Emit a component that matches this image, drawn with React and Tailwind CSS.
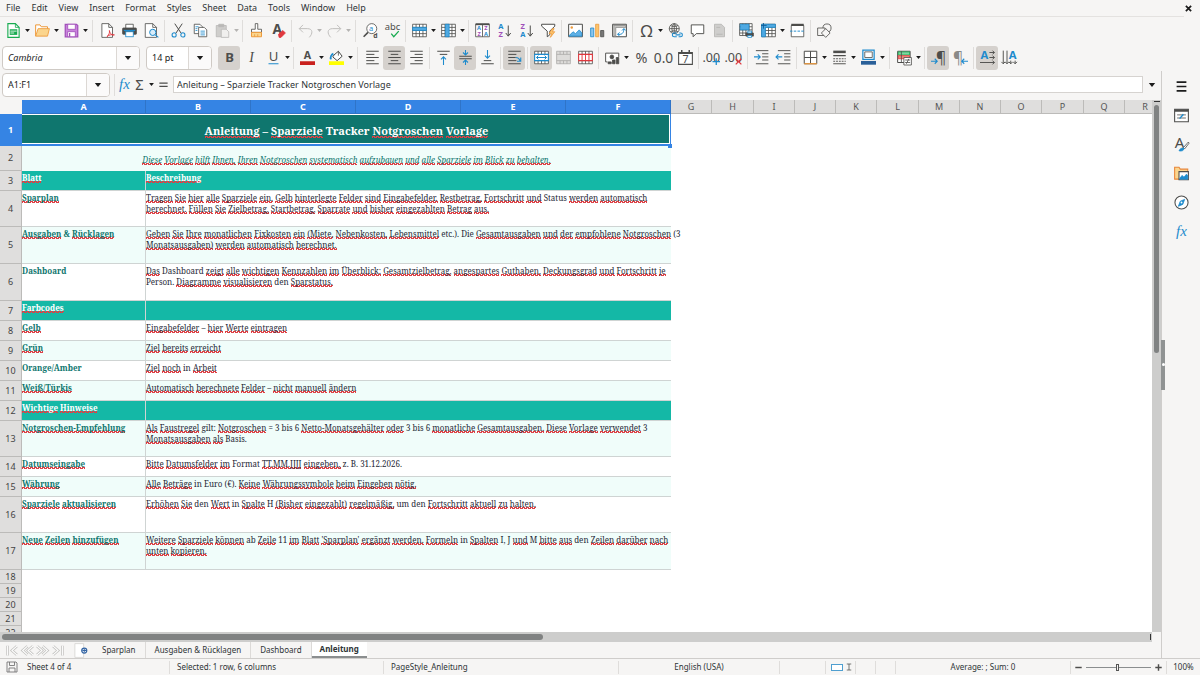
import { useState } from 'react';

const DARK = '#4d4d4b';
const BLUE = '#1e8bcd';
const RED = '#e0383e';
const ORANGE = '#ed9a3c';
const PURPLE = '#a14fb9';
const GREEN = '#18ab50';

const MENUS = ['File', 'Edit', 'View', 'Insert', 'Format', 'Styles', 'Sheet', 'Data', 'Tools', 'Window', 'Help'];

function Svg({ children, className = 'size-[15px]' }) {
  return (
    <svg viewBox="0 0 24 24" className={`overflow-visible ${className}`} fill="none" stroke={DARK} strokeWidth="1.3" aria-hidden="true">
      {children}
    </svg>
  );
}

// text glyph inside an icon
function G({ x, y, size, color = DARK, bold, italic, serif, children }) {
  return (
    <text
      x={x}
      y={y}
      fontSize={size}
      fill={color}
      stroke="none"
      textAnchor="middle"
      fontWeight={bold ? 700 : 400}
      fontStyle={italic ? 'italic' : 'normal'}
      fontFamily={serif ? 'Liberation Serif, serif' : 'Noto Sans, sans-serif'}
    >
      {children}
    </text>
  );
}

const grid = 'M1 2h22v20H1zM1 7h22M1 12h22M1 17h22M6.5 2v20M12 2v20M17.5 2v20';

const ICONS = {
  new: (
    <>
      <path d="M3 1h12l6 6v16H3z" fill="#fff" stroke={GREEN} strokeWidth="1.8" />
      <path d="M15 1v6h6" stroke={GREEN} />
      <rect x="6" y="10" width="12" height="9" fill={GREEN} stroke="none" />
      <path d="M7 13h10M7 16h6" stroke="#fff" />
    </>
  ),
  open: (
    <>
      <path d="M1 21V3h7l2 3h10v4" fill="#fff" stroke={ORANGE} strokeWidth="1.6" />
      <path d="M1 21l4-12h18l-3 12z" fill="#fbd58d" stroke={ORANGE} strokeWidth="1.4" />
    </>
  ),
  save: (
    <>
      <path d="M2 2h18l2 2v18H2z" fill="#c983dc" stroke={PURPLE} strokeWidth="2" />
      <rect x="6" y="2" width="12" height="8" fill="#fff" stroke={PURPLE} />
      <rect x="6" y="14" width="12" height="8" fill="#fff" stroke={PURPLE} />
      <path d="M9 16v6" stroke={PURPLE} strokeWidth="2" />
    </>
  ),
  pdf: (
    <>
      <path d="M3 1h11l6 6v16H3z" fill="#fff" />
      <path d="M14 1v6h6" />
      <path d="M11 22c3-2 5-7 4-10 1 5 4 8 8 7-5-1-9 0-12 3z" stroke={RED} strokeWidth="1.5" />
    </>
  ),
  print: (
    <>
      <path d="M6 8V2h12v6" fill="#fff" />
      <rect x="1" y="8" width="22" height="10" rx="1" fill={DARK} />
      <rect x="6" y="14" width="12" height="8" fill="#fff" stroke={BLUE} />
      <path d="M3 12h18" stroke={BLUE} strokeWidth="2" />
    </>
  ),
  preview: (
    <>
      <path d="M2 1h12l6 6v16H2z" fill="#fff" />
      <path d="M14 1v6h6" />
      <circle cx="14" cy="15" r="5" fill="#d9edfa" stroke={BLUE} strokeWidth="1.6" />
      <path d="M18 19l5 4" stroke={BLUE} strokeWidth="2" />
    </>
  ),
  cut: (
    <>
      <path d="M6 1l10 15M18 1L8 16" strokeWidth="1.6" />
      <circle cx="5" cy="19" r="3.3" stroke={BLUE} strokeWidth="1.7" />
      <circle cx="19" cy="19" r="3.3" stroke={BLUE} strokeWidth="1.7" />
    </>
  ),
  copy: (
    <>
      <path d="M2 2h9l4 4v11H2z" fill="#fff" />
      <path d="M9 7h9l4 4v11H9z" fill="#fff" />
      <path d="M4 6h5M4 9h3M4 12h3M12 13h7M12 16h7M12 19h7" stroke={BLUE} />
    </>
  ),
  paste: (
    <g stroke="#b9b8b6">
      <path d="M2 4h16v18H2z" fill="#cfcecc" />
      <path d="M6 2h8v4H6z" fill="#b9b8b6" />
      <path d="M10 10h8l4 4v9H10z" fill="#f0efee" />
    </g>
  ),
  brush: (
    <>
      <path d="M10 1h4v9h6v5H4v-5h6z" fill="#fff" />
      <path d="M4 15h16v7H4z" fill="#fbd58d" stroke={ORANGE} strokeWidth="1.6" />
      <path d="M9 22v-4M14 22v-4" stroke={ORANGE} />
    </>
  ),
  clear: (
    <>
      <G x={10} y={18} size={22} bold>A</G>
      <path d="M12 18l7-6 4 4-7 7h-3z" fill={RED} stroke={RED} />
    </>
  ),
  undo: <path d="M8 3L2 9l6 6M2 9h13c9 0 9 8 3 14" stroke="#bdbcba" strokeWidth="1.5" />,
  redo: <path d="M16 3l6 6-6 6M22 9H9c-9 0-9 8-3 14" stroke="#bdbcba" strokeWidth="1.5" />,
  find: (
    <>
      <circle cx="14" cy="9" r="8" fill="#fff" />
      <path d="M8 15l-7 7" strokeWidth="2.6" />
      <G x={13} y={12} size={12} color={BLUE}>a</G>
      <G x={20} y={24} size={11} bold>d</G>
    </>
  ),
  spell: (
    <>
      <G x={12} y={11} size={15}>abc</G>
      <path d="M10 17l4 5 8-9" stroke={GREEN} strokeWidth="2" />
    </>
  ),
  row: (
    <>
      <path d={grid} fill="#fff" />
      <path d="M1 7h22v5H1z" fill="#4fa9e2" stroke={BLUE} />
    </>
  ),
  column: (
    <>
      <path d={grid} fill="#fff" />
      <path d="M7 2h6v20H7z" fill="#4fa9e2" stroke={BLUE} />
    </>
  ),
  sort: (
    <>
      <path d="M1 2h22v20H1zM12 2v20" fill="#fff" />
      <path d="M1 2h22" strokeWidth="3" />
      <G x={6.5} y={11} size={9} color={BLUE} bold>A</G>
      <G x={6.5} y={21} size={9} color={PURPLE} bold>Z</G>
      <G x={17.5} y={11} size={9} color={PURPLE} bold>Z</G>
      <G x={17.5} y={21} size={9} color={BLUE} bold>A</G>
    </>
  ),
  sortAsc: (
    <>
      <G x={6} y={9} size={12} color={BLUE} bold>A</G>
      <G x={6} y={23} size={12} color={PURPLE} bold>Z</G>
      <path d="M18 4v17M14 16l4 5 4-5" strokeWidth="1.6" />
    </>
  ),
  sortDesc: (
    <>
      <G x={6} y={9} size={12} color={PURPLE} bold>Z</G>
      <G x={6} y={23} size={12} color={BLUE} bold>A</G>
      <path d="M18 4v17M14 16l4 5 4-5" strokeWidth="1.6" />
    </>
  ),
  filter: (
    <>
      <path d="M1 2h21v3l-8 8v6l-4 3v-9L1 5z" fill="#fff" strokeWidth="1.6" />
      <path d="M18 9l-5 8h4l-2 6 7-9h-4l3-5z" fill="#fbc56d" stroke={ORANGE} />
    </>
  ),
  image: (
    <>
      <path d="M1 2h22v20H1z" fill="#fff" strokeWidth="1.6" />
      <path d="M2 20l6-6 4 3 6-6 4 5v5H2z" fill="#5fb0e6" stroke={BLUE} />
      <circle cx="6" cy="7" r="2" fill={ORANGE} stroke="none" />
    </>
  ),
  chart: (
    <>
      <path d="M1 8h5v14H1z" fill="#8cc5ec" stroke={BLUE} />
      <path d="M9 2h5v20H9z" fill="#fbc56d" stroke={ORANGE} />
      <path d="M17 12h5v10h-5z" fill="#777" />
    </>
  ),
  pivot: (
    <>
      <path d="M1 2h22v20H1z" fill="#fff" strokeWidth="1.6" />
      <path d="M2 4h20v3H6v14H3V4" fill="#c9c8c6" stroke="#8a8a88" />
      <path d="M9 18c6 1 10-1 10-9M9 18l3-3M9 18l3 3M19 9l-3 3M19 9l3 3" stroke={BLUE} strokeWidth="1.6" />
    </>
  ),
  omega: <G x={12} y={22} size={27}>Ω</G>,
  link: (
    <>
      <circle cx="10" cy="9" r="8" />
      <path d="M2 9h16M10 1v16M4 4c3 2 9 2 12 0M4 14c3-2 9-2 12 0M10 1c-5 4-5 12 0 16M10 1c5 4 5 12 0 16" />
      <path d="M14 16h-4c-4 0-4 6 0 6h4M18 16h2c4 0 4 6 0 6h-3M12 19h8" stroke={BLUE} strokeWidth="1.8" />
    </>
  ),
  comment: <path d="M2 3h20v14H10l-5 5v-5H2z" fill="#fff" strokeWidth="1.5" />,
  headers: <path d="M4 2h11l5 5v15H4zM7 18h10M7 7h6" fill="#cfcecc" stroke="#b5b4b2" />,
  printRange: (
    <>
      <path d="M1 1h20v19H1zM1 6h20M1 11h20M1 16h20M6 1v19M11 1v19M16 1v19" fill="#fff" />
      <path d="M2 2h14v9H2z" fill="#4fa9e2" stroke={BLUE} />
      <path d="M11 16h12v5H11z" fill={DARK} />
      <path d="M14 13h6v3h-6zM14 20h6v3h-6z" fill="#fff" stroke={BLUE} />
    </>
  ),
  freeze: (
    <>
      <path d={grid} fill="#fff" />
      <path d="M1 2h22v5H7v15H1z" fill="#4fa9e2" stroke={BLUE} />
      <path d="M4 0v9M0 4h9" stroke="#0e5a94" />
    </>
  ),
  split: (
    <>
      <path d="M2 4h20v18H2z" fill="#fff" />
      <path d="M2 3h20" strokeWidth="3.5" />
      <path d="M0 13h24" stroke={BLUE} strokeDasharray="4 2" strokeWidth="1.5" />
    </>
  ),
  shapes: (
    <>
      <circle cx="16" cy="8" r="6.5" />
      <path d="M1 8h12v12H1z" fill="#f6f5f4" />
      <path d="M14 9l7 7-7 7-7-7z" fill="#f6f5f4" />
    </>
  ),
  bold: <G x={12} y={19.5} size={21} bold>B</G>,
  italic: <G x={12} y={19.5} size={22} italic serif>I</G>,
  underline: (
    <>
      <G x={12} y={17} size={21}>U</G>
      <path d="M4 22h16" stroke={BLUE} strokeWidth="1.6" />
    </>
  ),
  fontColor: (
    <>
      <G x={12} y={15} size={17} bold>A</G>
      <path d="M0 21h24" stroke="#c9211e" strokeWidth="6" />
    </>
  ),
  fill: (
    <>
      <path d="M8 8l7-6 6 8-8 7-7-6z" fill="#fff" strokeWidth="1.6" />
      <path d="M15 2v7" />
      <path d="M7 6c-3 1-5 5-4 9" stroke={BLUE} strokeWidth="3" />
      <path d="M0 21h24" stroke="#ffff00" strokeWidth="6" />
    </>
  ),
  left: <path d="M2 2h20M2 7h13M2 12h20M2 17h13M2 22h20" strokeWidth="1.6" />,
  center: <path d="M2 2h20M6 7h12M2 12h20M6 17h12M2 22h20" strokeWidth="1.6" />,
  right: <path d="M2 2h20M9 7h13M2 12h20M9 17h13M2 22h20" strokeWidth="1.6" />,
  top: (
    <>
      <path d="M2 2h20M6 7h12" strokeWidth="1.6" />
      <path d="M12 24V11M8 15l4-4 4 4" stroke={BLUE} strokeWidth="1.7" />
    </>
  ),
  middle: (
    <>
      <path d="M2 10h20M2 14h20" strokeWidth="1.6" />
      <path d="M12 0v8M8 4l4 4 4-4M12 24v-8M8 20l4-4 4 4" stroke={BLUE} strokeWidth="1.7" />
    </>
  ),
  bottom: (
    <>
      <path d="M2 22h20M6 17h12" strokeWidth="1.6" />
      <path d="M12 0v13M8 9l4 4 4-4" stroke={BLUE} strokeWidth="1.7" />
    </>
  ),
  wrap: (
    <>
      <path d="M2 2h20M2 7h13M2 12h12M2 17h13M2 22h20" strokeWidth="1.6" />
      <path d="M14 12c4 0 6 2 7 6M16 18h6v-6" stroke={BLUE} strokeWidth="1.7" />
    </>
  ),
  merge: (
    <>
      <path d={grid} fill="#fff" />
      <path d="M1 7h22v10H1z" fill="#fff" stroke={BLUE} strokeWidth="1.7" />
      <path d="M4 12h16M7 9l-3 3 3 3M17 9l3 3-3 3" stroke={BLUE} strokeWidth="1.6" />
    </>
  ),
  split2: <path d="M1 2h22v20H1zM1 7h22M1 17h22M6.5 2v5M12 2v5M17.5 2v5M6.5 17v5M12 17v5M17.5 17v5" fill="#dddcda" stroke="#acabaa" />,
  unmerge: (
    <>
      <path d={grid} fill="#fff" />
      <path d="M1 7h22v10H1z" fill="#fff" stroke={RED} strokeWidth="1.7" />
      <path d="M6.5 7v10M12 7v10M17.5 7v10" stroke={RED} strokeWidth="1.5" />
    </>
  ),
  currency: (
    <>
      <path d="M22 11V5H1v14h3" fill="#fff" strokeWidth="1.5" />
      <circle cx="11" cy="11" r="3" fill={DARK} />
      <path d="M12 16h4v6h-4zM18 12h4v10h-4zM5 19h5v3H5z" fill={DARK} />
    </>
  ),
  percent: <G x={12} y={20} size={23}>%</G>,
  number: <G x={12} y={20} size={22}>0.0</G>,
  date: (
    <>
      <path d="M1 4h22v19H1z" fill="#fff" strokeWidth="1.7" />
      <path d="M1 5h22M6 0v4M18 0v4" strokeWidth="2.4" />
      <G x={12} y={20} size={17}>7</G>
    </>
  ),
  addDecimal: (
    <>
      <G x={10} y={19} size={20}>.00</G>
      <path d="M18 13v11M12 18.5h12" stroke={BLUE} strokeWidth="2" />
    </>
  ),
  delDecimal: (
    <>
      <G x={10} y={19} size={20}>.00</G>
      <path d="M14 14l9 9M23 14l-9 9" stroke={RED} strokeWidth="2" />
    </>
  ),
  indent: (
    <>
      <path d="M3 1h20M13 6h10M13 11h10M13 16h10M3 22h20" strokeWidth="1.5" />
      <path d="M0 11h10M6 7l4 4-4 4" stroke={BLUE} strokeWidth="1.7" />
    </>
  ),
  outdent: (
    <>
      <path d="M3 1h20M13 6h10M13 11h10M13 16h10M3 22h20" strokeWidth="1.5" />
      <path d="M10 11H0M4 7l-4 4 4 4" stroke={BLUE} strokeWidth="1.7" />
    </>
  ),
  borders: (
    <>
      <path d="M2 2h20v20H2z" fill="#fff" strokeWidth="1.6" />
      <path d="M12 2v20M2 12h20" strokeWidth="1.6" />
      <path d="M2 22h20" stroke={ORANGE} strokeWidth="2" />
    </>
  ),
  borderStyle: (
    <>
      <path d="M2 3h20" strokeWidth="4" />
      <path d="M2 9h20" strokeWidth="2" />
      <path d="M2 14h20M2 18h20" strokeDasharray="3 1.5" strokeWidth="1.5" />
      <path d="M2 22h20" strokeWidth="1.5" />
    </>
  ),
  borderColor: (
    <>
      <path d="M3 0h18v15H3z" fill="#fff" stroke={BLUE} strokeWidth="2" />
      <path d="M6 3h12v9H6z" />
      <path d="M0 20.5h24" stroke="#2a6099" strokeWidth="6" />
    </>
  ),
  conditional: (
    <>
      <path d="M1 2h20v18H1z" fill="#fff" strokeWidth="1.6" />
      <path d="M2 3h18v5H2z" fill="#7ed6a0" stroke={GREEN} />
      <path d="M2 9h18v5H2z" fill="#f08a7a" stroke={RED} />
      <path d="M7 2v18" />
      <path d="M11 12h12v12H11z" fill="#fff" />
      <path d="M13 16h8M13 20h8M19 14l-4 8" />
    </>
  ),
  ltr: (
    <>
      <G x={16} y={20} size={25}>¶</G>
      <path d="M0 18h10M6 14l4 4-4 4" stroke={BLUE} strokeWidth="1.7" />
    </>
  ),
  rtl: (
    <>
      <G x={8} y={20} size={25} color="#8a8a88">¶</G>
      <path d="M24 18H14M18 14l-4 4 4 4" stroke={BLUE} strokeWidth="1.7" />
    </>
  ),
  horizontalText: (
    <>
      <G x={7} y={15} size={18} color={BLUE} bold>A</G>
      <path d="M15 4h8M20 1l3 3-3 3M15 12h8M20 9l3 3-3 3M0 20h23M20 17l3 3-3 3" strokeWidth="1.5" />
    </>
  ),
  verticalText: (
    <>
      <G x={17} y={15} size={18} color={BLUE} bold>A</G>
      <path d="M2 1v21M-1 19l3 3 3-3M8 1v21M5 19l3 3 3-3M14 17v5M11 19l3 3 3-3M21 17v5M18 19l3 3 3-3" strokeWidth="1.5" />
    </>
  ),
  fx: <G x={12} y={19} size={24} color={BLUE} italic serif>fx</G>,
  sum: <G x={12} y={22} size={27}>Σ</G>,
  equals: <path d="M3 9h18M3 16h18" strokeWidth="2.8" />,
  properties: (
    <>
      <path d="M1 2h22v20H1z" fill="#fff" strokeWidth="1.7" />
      <path d="M1 4h22" strokeWidth="4" />
      <path d="M5 11h14M5 16h14" />
      <path d="M9 17l6-7" stroke={BLUE} strokeWidth="2.2" />
    </>
  ),
  styles: (
    <>
      <G x={9} y={18} size={24}>A</G>
      <path d="M23 8l-8 9 2 2 7-9z" fill="#fff" />
      <path d="M8 22c2-4 5-5 8-4 0 4-4 5-8 4z" fill={BLUE} stroke={BLUE} />
    </>
  ),
  gallery: (
    <>
      <path d="M1 21V2h7l2 3h12v16z" fill="#fbd58d" stroke="#e8863a" strokeWidth="1.7" />
      <path d="M8 9h15v13H8z" fill="#fff" strokeWidth="1.7" />
      <path d="M9 20l4-5 3 3 4-5 2 3v5H9z" fill={BLUE} stroke={BLUE} />
    </>
  ),
  navigator: (
    <>
      <circle cx="12" cy="12" r="10.5" fill="#fff" strokeWidth="1.7" />
      <path d="M17 7l-3 8-7 3 3-8z" fill={BLUE} stroke={BLUE} />
      <circle cx="12" cy="12" r="1.5" fill="#fff" stroke="none" />
    </>
  ),
};

// '|' separator, '||' wide separator, '+' after a name adds the drop-down arrow, '*' marks a pressed button
const STANDARD_BAR = 'new+ open+ save+ || pdf print preview | cut copy paste+- | brush clear | undo+- redo+- || find spell | row+ column+ | sort sortAsc sortDesc filter | image chart pivot | omega+ link comment headers | printRange freeze+ split | shapes'.split(' ');
const FORMAT_BAR = 'bold* italic underline+ | fontColor+ fill+ || left center* right | top middle* bottom | wrap* | merge* split2 unmerge | currency+ percent number date | addDecimal delDecimal | indent outdent | borders+ borderStyle+ borderColor+ || conditional+ | ltr* rtl | horizontalText* verticalText'.split(' ');

function Arrow({ muted, className = 'w-[7px] h-[4px]' }) {
  return (
    <svg viewBox="0 0 8 5" className={className} fill={muted ? '#b5b4b2' : '#1c1c1c'} aria-hidden="true">
      <path d="M0 0h8L4 5z" />
    </svg>
  );
}

function ToolItems({ items }) {
  return items.map((item, i) => {
    if (item[0] === '|') {
      return (
        <span key={i} className={`flex justify-center shrink-0 ${item === '||' ? 'w-[7px]' : 'w-[5px]'}`}>
          <span className="w-px h-[22px] bg-[#dfdddb]" />
        </span>
      );
    }
    const name = item.replace(/[^a-z0-9]/gi, '');
    const pressed = item.includes('*');
    return (
      <span key={i} className="flex items-center shrink-0">
        <button
          aria-label={name}
          aria-pressed={pressed}
          className={`flex items-center justify-center w-[22px] h-6 rounded-[3px] ${pressed ? 'bg-[#d5d1cd]' : ''}`}
        >
          <Svg>{ICONS[name]}</Svg>
        </button>
        {item.includes('+') && (
          <button aria-label={`${name} options`} className="flex items-center justify-center w-[7px] h-6">
            <Arrow muted={item.endsWith('-')} className="w-[5px] h-[3px]" />
          </button>
        )}
      </span>
    );
  });
}

function Combo({ label, value, width, italic }) {
  return (
    <div className={`flex shrink-0 bg-white border border-[#cfcac5] rounded-[4px] overflow-hidden ${width}`}>
      <input
        aria-label={label}
        defaultValue={value}
        className={`flex-1 min-w-0 px-[5px] text-[9px] text-[#1c1c1c] outline-none ${italic ? 'italic' : ''}`}
      />
      <button aria-label={`${label} list`} className="flex items-center justify-center w-[23px] border-l border-[#dcd8d4] bg-[#fbfafa]">
        <Arrow className="w-[8px] h-[4px]" />
      </button>
    </div>
  );
}

// words the English spell checker accepts
const KNOWN = new Set('Tracker Dashboard Status etc Die gilt bis Basis Format in den Person Euro H z B ab um Orange/Amber I J M'.split(' '));

// small zigzag under the word, finer than the browser's own wavy line
const WAVE = 'bg-[linear-gradient(45deg,transparent_35%,#dc4045_35%_70%,transparent_70%),linear-gradient(135deg,transparent_35%,#dc4045_35%_70%,transparent_70%)] bg-[length:4px_2px] bg-[position:0_100%,2px_100%] bg-repeat-x';

function Spelled({ text }) {
  return text.split(' ').map((word, i) => {
    const bare = word.replace(/^[('"]+|[).,:'"]+$/g, '');
    const ok = KNOWN.has(bare) || !/[a-zäöüß]{2}|TT/i.test(bare);
    return (
      <span key={i}>
        {i > 0 && ' '}
        <span className={ok ? '' : WAVE}>{word}</span>
      </span>
    );
  });
}

const ROWS = [
  { h: 'h-[20px]', head: true, a: 'Blatt', b: ['Beschreibung'] },
  { h: 'h-[36px]', a: 'Sparplan', b: ['Tragen Sie hier alle Sparziele ein. Gelb hinterlegte Felder sind Eingabefelder. Restbetrag, Fortschritt und Status werden automatisch', 'berechnet. Füllen Sie Zielbetrag, Startbetrag, Sparrate und bisher eingezahlten Betrag aus.'] },
  { h: 'h-[37px]', tint: true, a: 'Ausgaben & Rücklagen', b: ['Geben Sie Ihre monatlichen Fixkosten ein (Miete, Nebenkosten, Lebensmittel etc.). Die Gesamtausgaben und der empfohlene Notgroschen (3', 'Monatsausgaben) werden automatisch berechnet.'] },
  { h: 'h-[37px]', a: 'Dashboard', b: ['Das Dashboard zeigt alle wichtigen Kennzahlen im Überblick: Gesamtzielbetrag, angespartes Guthaben, Deckungsgrad und Fortschritt je', 'Person. Diagramme visualisieren den Sparstatus.'] },
  { h: 'h-[20px]', head: true, a: 'Farbcodes', b: [] },
  { h: 'h-[20px]', a: 'Gelb', b: ['Eingabefelder – hier Werte eintragen'] },
  { h: 'h-[20px]', tint: true, a: 'Grün', b: ['Ziel bereits erreicht'] },
  { h: 'h-[20px]', a: 'Orange/Amber', b: ['Ziel noch in Arbeit'] },
  { h: 'h-[20px]', tint: true, a: 'Weiß/Türkis', b: ['Automatisch berechnete Felder – nicht manuell ändern'] },
  { h: 'h-[20px]', head: true, a: 'Wichtige Hinweise', b: [] },
  { h: 'h-[36px]', tint: true, a: 'Notgroschen-Empfehlung', b: ['Als Faustregel gilt: Notgroschen = 3 bis 6 Netto-Monatsgehälter oder 3 bis 6 monatliche Gesamtausgaben. Diese Vorlage verwendet 3', 'Monatsausgaben als Basis.'] },
  { h: 'h-[20px]', a: 'Datumseingabe', b: ['Bitte Datumsfelder im Format TT.MM.JJJJ eingeben, z. B. 31.12.2026.'] },
  { h: 'h-[20px]', tint: true, a: 'Währung', b: ['Alle Beträge in Euro (€). Keine Währungssymbole beim Eingeben nötig.'] },
  { h: 'h-[36px]', a: 'Sparziele aktualisieren', b: ['Erhöhen Sie den Wert in Spalte H (Bisher eingezahlt) regelmäßig, um den Fortschritt aktuell zu halten.'] },
  { h: 'h-[37px]', tint: true, a: 'Neue Zeilen hinzufügen', b: ["Weitere Sparziele können ab Zeile 11 im Blatt 'Sparplan' ergänzt werden. Formeln in Spalten I, J und M bitte aus den Zeilen darüber nach", 'unten kopieren.'] },
];

const COLUMNS = 'ABCDEFGHIJKLMNOPQR'.split('');

function RowHead({ n, active }) {
  return (
    <th
      scope="row"
      className={`p-0 align-middle text-center leading-[10px] border-b border-r ${active ? 'bg-[#3584e4] text-white font-bold border-[#3584e4]' : 'bg-[#dfdedd] text-[#444] font-normal border-[#bcbbb9]'}`}
    >
      {n}
    </th>
  );
}

function Sheet() {
  return (
    <div className="flex-1 min-w-0 min-h-0 overflow-hidden bg-white">
      <table className="table-fixed border-separate border-spacing-0 w-[1166px] min-w-full text-[9px]">
        <colgroup>
          <col className="w-[22px]" />
          <col className="w-[124px]" />
          {COLUMNS.slice(1, 6).map(c => <col key={c} className="w-[105px]" />)}
          {COLUMNS.slice(6, -1).map((c, i) => <col key={c} className={i % 4 === 1 ? 'w-[42px]' : 'w-[41px]'} />)}
          <col />
        </colgroup>
        <thead>
          <tr className="h-[14px] leading-[12px]">
            <td className="p-0 bg-[#f6f5f4]" />
            {COLUMNS.map((c, i) => (
              <th
                key={c}
                scope="col"
                className={`p-0 border-r border-b ${i < 6 ? 'bg-[#3584e4] text-white font-bold border-[#2f74c8]' : 'bg-[#dfdedd] text-[#555] font-normal border-[#bcbbb9]'}`}
              >
                {c}
              </th>
            ))}
          </tr>
        </thead>
        <tbody className="font-['Noto_Serif','DejaVu_Serif_Condensed','DejaVu_Serif',serif] text-[8px] leading-[11px] text-[#1f2937] [&_th]:font-['Noto_Sans',sans-serif] [&_th]:text-[9px]">
          <tr className="h-[32px]">
            <RowHead n={1} active />
            <td colSpan={6} className="relative p-0 pt-[2px] bg-[#0f766e] text-white text-[11px] leading-[16px] font-bold text-center align-middle">
              <Spelled text="Anleitung – Sparziele Tracker Notgroschen Vorlage" />
              <span className="absolute inset-0 border-r border-b-2 border-[#3584e4]" />
              <span className="absolute inset-0 right-px bottom-[2px] border border-l-0 border-white" />
              <span className="absolute -right-px -bottom-[2px] size-1 bg-[#3584e4]" />
            </td>
            <td colSpan={12} />
          </tr>
          <tr className="h-[25px]">
            <RowHead n={2} />
            <td colSpan={6} className="p-0 pt-[2px] bg-[#f0fdfa] text-[#0f766e] italic text-center align-middle">
              <Spelled text="Diese Vorlage hilft Ihnen, Ihren Notgroschen systematisch aufzubauen und alle Sparziele im Blick zu behalten." />
            </td>
            <td colSpan={12} />
          </tr>
          {ROWS.map((r, i) => (
            <tr key={i} className={`${r.h} ${r.head ? 'text-white font-bold' : ''}`}>
              <RowHead n={i + 3} />
              <td className={`p-0 pt-px align-top whitespace-nowrap font-bold border-r border-b border-[#cfd4d3] ${r.head ? 'bg-[#14b8a6]' : r.tint ? 'bg-[#f0fdfa] text-[#0f766e]' : 'bg-white text-[#0f766e]'}`}>
                <Spelled text={r.a} />
              </td>
              <td colSpan={5} className={`p-0 pt-px align-top whitespace-nowrap border-b border-[#cfd4d3] ${r.head ? 'bg-[#14b8a6]' : r.tint ? 'bg-[#f0fdfa]' : 'bg-white'}`}>
                {r.b.map(line => <div key={line}><Spelled text={line} /></div>)}
              </td>
              <td colSpan={12} />
            </tr>
          ))}
          {[18, 19, 20, 21, 22].map(n => (
            <tr key={n} className="h-[14px]">
              <RowHead n={n} />
              <td colSpan={18} />
            </tr>
          ))}
        </tbody>
      </table>
    </div>
  );
}

function SheetTabs() {
  const [active, setActive] = useState('Anleitung');
  return (
    <div className="flex items-stretch h-4 shrink-0 text-[8px] text-[#2e3436]">
      <div className="flex items-center pl-[6px] w-[73px]">
        {['M3 3v18M20 4l-9 8 9 8', 'M12 4l-9 8 9 8M22 4l-9 8 9 8', 'M2 4l9 8-9 8M12 4l9 8-9 8', 'M4 4l9 8-9 8M21 3v18'].map((d, i) => (
          <button key={d} aria-label={['First', 'Previous', 'Next', 'Last'][i] + ' sheet'} className="w-[15px]">
            <Svg className="size-[13px]">
              <path d={d} stroke="#c4c3c1" strokeWidth="5" />
              <path d={d} stroke="#fff" strokeWidth="2" />
            </Svg>
          </button>
        ))}
      </div>
      <button aria-label="Add sheet" className="w-[20px]">
        <Svg className="size-[15px]">
          <path d="M3 1h14v22H3z" fill="#fff" stroke="#d5d4d2" />
          <circle cx="18" cy="12" r="4" fill="#fff" stroke="#3465a4" strokeWidth="2" />
          <path d="M18 9v6M15 12h6" stroke="#3465a4" strokeWidth="1.6" />
        </Svg>
      </button>
      {['Sparplan', 'Ausgaben & Rücklagen', 'Dashboard', 'Anleitung'].map(t => (
        <button
          key={t}
          onClick={() => setActive(t)}
          className={t === active ? 'px-[8px] bg-white font-bold border-b-2 border-[#8b8e8f]' : 'px-[9px] border-r border-[#dcdad8]'}
        >
          {t}
        </button>
      ))}
    </div>
  );
}

function StatusBar() {
  const cell = 'flex items-center border-r border-[#dfdddb] h-[13px]';
  return (
    <footer className="flex items-center h-[17px] shrink-0 border-t border-[#cfcdcb] text-[8px] text-[#2e3436]">
      <div className={`${cell} w-[170px] pl-[6px] gap-[9px]`}>
        <Svg className="size-[12px]">
          <path d="M2 2h18l2 2v18H2zM7 2v7h10V2M6 22v-8h12v8" stroke="#777" strokeWidth="1.8" />
        </Svg>
        Sheet 4 of 4
      </div>
      <div className={`${cell} w-[214px] pl-[7px]`}>Selected: 1 row, 6 columns</div>
      <div className={`${cell} flex-1 pl-[7px]`}>PageStyle_Anleitung</div>
      <div className={`${cell} w-[161px] justify-center`}>English (USA)</div>
      <div className={`${cell} w-[46px]`} />
      <div className={`${cell} w-[30px] pl-[5px] gap-[3px]`}>
        <span className="w-3 h-[7px] border border-[#4f9fd0] bg-white" />
        <Svg className="w-[6px] h-3">
          <path d="M3 0h18M12 0v24M3 24h18" strokeWidth="3" />
        </Svg>
      </div>
      <div className={`${cell} w-[20px]`} />
      <div className={`${cell} w-[20px]`} />
      <div className={`${cell} w-[175px] justify-center`}>Average: ; Sum: 0</div>
      <div className={`${cell} w-[96px] justify-center gap-[4px]`}>
        <button aria-label="Zoom out" className="w-[7px]"><Svg className="size-[7px]"><path d="M1 12h22" strokeWidth="5" /></Svg></button>
        <input
          type="range"
          aria-label="Zoom"
          min="0"
          max="100"
          defaultValue="49"
          className="w-[65px] h-px appearance-none bg-[#8b8e8f] [&::-webkit-slider-thumb]:appearance-none [&::-webkit-slider-thumb]:w-[3px] [&::-webkit-slider-thumb]:h-[7px] [&::-webkit-slider-thumb]:bg-[#f6f5f4] [&::-webkit-slider-thumb]:border [&::-webkit-slider-thumb]:border-[#555]"
        />
        <button aria-label="Zoom in" className="w-[7px]"><Svg className="size-[7px]"><path d="M1 12h22M12 1v22" strokeWidth="5" /></Svg></button>
      </div>
      <div className="w-[33px] text-center">100%</div>
    </footer>
  );
}

export default function App() {
  return (
    <div className="flex flex-col h-screen overflow-hidden bg-[#f6f5f4] text-[#2e3436] font-['Noto_Sans',sans-serif]">
      <nav className="flex items-center h-[17px] shrink-0 mr-4 pl-[6px] gap-[11px] border-b border-[#e4e2e0] text-[9px]">
        {MENUS.map(m => <button key={m}>{m}</button>)}
        <button aria-label="Close document" className="ml-auto -mr-2">
          <Svg className="size-[7px]"><path d="M3 3l18 18M21 3L3 21" strokeWidth="6" stroke="#1c1c1c" /></Svg>
        </button>
      </nav>

      <div className="flex items-center h-[27px] shrink-0 pl-[2px]">
        <ToolItems items={STANDARD_BAR} />
      </div>
      <div className="flex items-center h-[27px] shrink-0 pl-[2px]">
        <div className="flex h-6 gap-[6px] mr-[6px]">
          <Combo label="Font name" value="Cambria" width="w-[138px]" italic />
          <Combo label="Font size" value="14 pt" width="w-[66px]" />
        </div>
        <ToolItems items={FORMAT_BAR} />
      </div>

      <div className="flex flex-1 min-h-0">
        <main className="flex flex-col flex-1 min-w-0">
          <div className="flex items-center h-[27px] mb-[2px] shrink-0 pl-[2px]">
            <div className="flex h-6"><Combo label="Name box" value="A1:F1" width="w-[108px]" /></div>
            <span className="ml-1 w-px h-[22px] bg-[#dfdddb]" />
            <button aria-label="Function wizard" className="ml-[2px]"><Svg>{ICONS.fx}</Svg></button>
            <button aria-label="Select function" className="flex items-center gap-[3px] ml-px">
              <Svg className="size-[13px]">{ICONS.sum}</Svg>
              <Arrow className="w-[5px] h-[3px]" />
            </button>
            <button aria-label="Formula" className="mx-[4px]"><Svg className="size-[11px]">{ICONS.equals}</Svg></button>
            <input
              aria-label="Input line"
              defaultValue="Anleitung – Sparziele Tracker Notgroschen Vorlage"
              className="flex-1 min-w-0 h-[17px] px-[3px] bg-white border border-[#d6d3d0] text-[9px] outline-none"
            />
            <button aria-label="Expand formula bar" className="px-[5px]"><Arrow className="w-[8px] h-[4px]" /></button>
          </div>

          <div className="flex flex-1 min-h-0">
            <Sheet />
            <div className="flex flex-col items-center w-[9px] shrink-0 bg-[#cdcdcc] pt-px">
              <span className="w-[6px] h-px bg-[#333]" />
              <span className="mt-[3px] w-[5px] h-[248px] rounded-full bg-[#808282]" />
            </div>
          </div>
          <div className="flex items-center justify-between h-[10px] shrink-0 mr-[9px] pl-[2px] bg-[#cdcdcc]">
            <span className="w-[47%] h-[6px] rounded-full bg-[#808282]" />
            <span className="mr-px w-px h-[6px] bg-[#333]" />
          </div>
          <SheetTabs />
        </main>

        <aside className="relative flex flex-col items-center w-[39px] shrink-0 pt-px border-l border-[#cfcdcb]">
          {['menu', 'properties', 'styles', 'gallery', 'navigator', 'fx'].map(name => (
            <button key={name} aria-label={name} className="flex items-center justify-center size-[29px]">
              {name === 'menu' ? (
                <Svg className="size-[13px]"><path d="M3 4h18M3 12h18M3 20h18" strokeWidth="3" stroke="#1c1c1c" /></Svg>
              ) : (
                <Svg>{ICONS[name]}</Svg>
              )}
            </button>
          ))}
          <button aria-label="Hide sidebar" className="absolute top-1/2 -left-px -translate-y-1/2 flex items-center justify-center w-[4px] h-[50px] bg-[#909393]">
            <span className="size-[3px] rounded-full bg-white" />
          </button>
        </aside>
      </div>
      <StatusBar />
    </div>
  );
}
